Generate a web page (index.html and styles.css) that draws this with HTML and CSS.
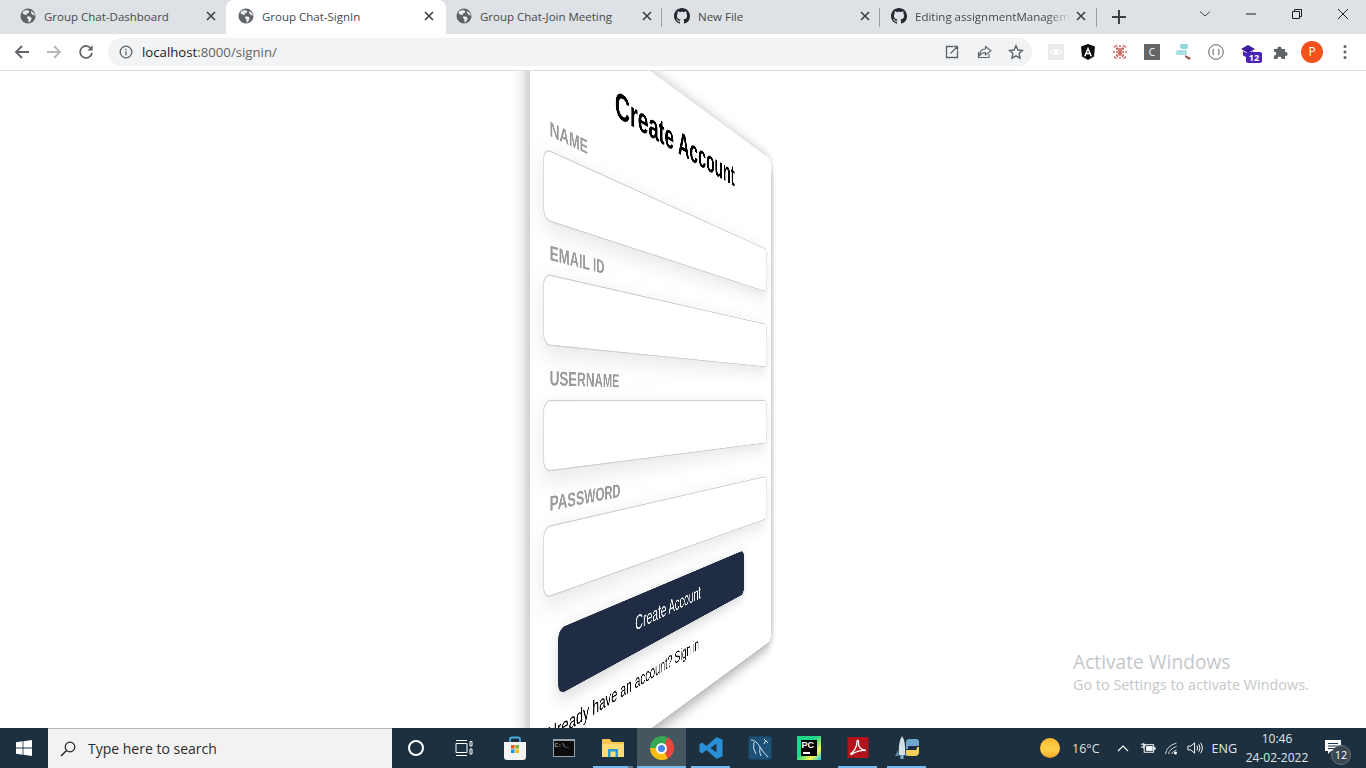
FILE: index.html
```html
<!DOCTYPE html>
<html lang="en">
<head>
<meta charset="utf-8">
<title>Group Chat-SignIn</title>
<link rel="stylesheet" href="styles.css">
</head>
<body>
<svg class="defs" width="0" height="0" aria-hidden="true">
  <symbol id="globe" viewBox="0 0 16 16"><circle cx="8" cy="8" r="7.5" fill="#5f6368"/><path d="M3 3.2 6.6 2 9.4 3 8.8 4.8 7 5.4 6.4 7.2 4.4 6.4 2.6 5.4zM7.6 8.2 10.6 8.8 11.8 10.4 10 14 8.6 14.4 8.4 11.4 6.8 9.8zM11.2 3 14 5 15 7.6 12.8 7 11 5z" fill="#e8eaed"/></symbol>
  <symbol id="octo" viewBox="0 0 16 16"><path fill="#24292f" d="M8 0C3.58 0 0 3.58 0 8c0 3.54 2.29 6.53 5.47 7.59.4.07.55-.17.55-.38 0-.19-.01-.82-.01-1.49-2.01.37-2.53-.49-2.69-.94-.09-.23-.48-.94-.82-1.13-.28-.15-.68-.52-.01-.53.63-.01 1.08.58 1.23.82.72 1.21 1.87.87 2.33.66.07-.52.28-.87.51-1.07-1.78-.2-3.64-.89-3.64-3.95 0-.87.31-1.59.82-2.15-.08-.2-.36-1.02.08-2.12 0 0 .67-.21 2.2.82.64-.18 1.32-.27 2-.27.68 0 1.36.09 2 .27 1.53-1.04 2.2-.82 2.2-.82.44 1.1.16 1.92.08 2.12.51.56.82 1.27.82 2.15 0 3.07-1.87 3.75-3.65 3.95.29.25.54.73.54 1.48 0 1.07-.01 1.93-.01 2.2 0 .21.15.46.55.38A8.013 8.013 0 0016 8c0-4.42-3.58-8-8-8z"/></symbol>
  <symbol id="x" viewBox="0 0 10 10"><path d="M1 1 9 9M9 1 1 9" stroke="#3c4043" stroke-width="1.6" fill="none"/></symbol>
</svg>

<header class="tabstrip">
  <div class="tab"><svg class="fav"><use href="#globe"/></svg><span class="tab-title">Group Chat-Dashboard</span><svg class="tab-x"><use href="#x"/></svg></div>
  <div class="tab tab-active"><svg class="fav"><use href="#globe"/></svg><span class="tab-title">Group Chat-SignIn</span><svg class="tab-x"><use href="#x"/></svg></div>
  <div class="tab"><svg class="fav"><use href="#globe"/></svg><span class="tab-title">Group Chat-Join Meeting</span><svg class="tab-x"><use href="#x"/></svg></div>
  <div class="tab tab-sep"><svg class="fav"><use href="#octo"/></svg><span class="tab-title">New File</span><svg class="tab-x"><use href="#x"/></svg></div>
  <div class="tab tab-sep tab-last"><svg class="fav"><use href="#octo"/></svg><span class="tab-title tab-fade">Editing assignmentManagem</span><svg class="tab-x"><use href="#x"/></svg></div>
  <svg class="new-tab" viewBox="0 0 14 14"><path d="M7 0V14M0 7H14" stroke="#3c4043" stroke-width="2"/></svg>
  <div class="win-controls">
    <svg class="win-btn" viewBox="0 0 12 12"><path d="M1 3.5 6 8 11 3.5" stroke="#3c4043" fill="none"/></svg>
    <svg class="win-btn" viewBox="0 0 12 12"><path d="M1 6H11" stroke="#1f1f1f"/></svg>
    <svg class="win-btn" viewBox="0 0 12 12"><path d="M1.5 3.5H8.5V10.5H1.5ZM3.5 3.5V1.5H10.5V8.5H8.5" stroke="#1f1f1f" fill="none"/></svg>
    <svg class="win-btn" viewBox="0 0 12 12"><path d="M1 1 11 11M11 1 1 11" stroke="#1f1f1f" fill="none"/></svg>
  </div>
</header>

<nav class="toolbar">
  <svg class="nav-ico" viewBox="0 0 16 16"><path d="M15 8H2M8 2 2 8l6 6" stroke="#5f6368" stroke-width="1.8" fill="none"/></svg>
  <svg class="nav-ico" viewBox="0 0 16 16"><path d="M1 8H14M8 2l6 6-6 6" stroke="#b4b7bb" stroke-width="1.8" fill="none"/></svg>
  <svg class="nav-ico" viewBox="0 0 16 16"><path d="M13.4 5.2A6 6 0 1 0 14 9" stroke="#5f6368" stroke-width="1.7" fill="none"/><path d="M14.6 1.2V6.4H9.4z" fill="#5f6368"/></svg>
  <div class="omnibox">
    <svg class="info" viewBox="0 0 14 14"><circle cx="7" cy="7" r="5.8" stroke="#5f6368" stroke-width="1.3" fill="none"/><path d="M7 6.2V10.2M7 3.8V5.2" stroke="#5f6368" stroke-width="1.3"/></svg>
    <span class="url">localhost<span class="url-dim">:8000/signin/</span></span>
    <div class="omni-actions">
      <svg class="omni-ico" viewBox="0 0 16 16"><path d="M9 2.5H2.5V13.5H13.5V7M6.5 9.5 13.5 2.5M9.5 2.5H13.5V6.5" stroke="#5f6368" stroke-width="1.3" fill="none"/></svg>
      <svg class="omni-ico" viewBox="0 0 16 16"><path d="M2.5 8V13.5H13V10M9.5 2.5 15 6.8 9.5 11V8.6C6 8.6 4.5 10 3.5 12 3.5 8 5.5 5.2 9.5 5Z" stroke="#5f6368" stroke-width="1.1" fill="none"/></svg>
      <svg class="omni-ico" viewBox="0 0 16 16"><path d="M8 1.8 9.9 6l4.6.5-3.4 3.1.9 4.6L8 11.9l-4 2.3.9-4.6L1.5 6.5 6.100 6Z" stroke="#5f6368" stroke-width="1.4" fill="none"/></svg>
    </div>
  </div>
  <div class="extensions">
    <span class="ext"><svg viewBox="0 0 16 16"><rect width="16" height="16" fill="#ececec"/><path d="M2 8Q8 3 14 8 8 13 2 8Z" stroke="#fff" fill="none"/><circle cx="8" cy="8" r="2" fill="#fff"/></svg></span>
    <span class="ext"><svg viewBox="0 0 16 16"><path d="M8 0 15 2.600 14 12.500 8 16 2 12.500 1 2.600Z" fill="#0c0c0c"/><path d="M8 2.800 4 12.200H5.600L6.400 10.200H9.600L10.400 12.200H12ZM7 8.800 8 6.200 9 8.800Z" fill="#fff"/></svg></span>
    <span class="ext"><svg viewBox="0 0 16 16"><path d="M2 2 14 14M14 2 2 14M8 1V15M1 8H15M4 1 12 15M12 1 4 15" stroke="#c9655f" stroke-width="1.500" stroke-dasharray="2 1"/></svg></span>
    <span class="ext"><span class="ext-c">C</span></span>
    <span class="ext"><svg viewBox="0 0 16 16"><rect x="4" y="0" width="8" height="5" rx="2" fill="#8fd6dc"/><rect x="0" y="6" width="11" height="5" rx="2" fill="#a7e0e4"/><path d="M9 11 15 14 13 16 9 13Z" fill="#9b5a50"/></svg></span>
    <span class="ext"><svg viewBox="0 0 16 16"><circle cx="8" cy="8" r="7.300" stroke="#5f6368" fill="none"/><path d="M6 5Q4.500 5 5 8 4.500 11 6 11M10 5Q11.500 5 11 8 11.500 11 10 11M8 8H8.100" stroke="#5f6368" fill="none"/></svg></span>
    <span class="ext ext-wide"><svg viewBox="0 0 16 16"><path d="M8 1 15 5 8 9 1 5Z" fill="#3d1c9b"/><path d="M3 7V11.500L8 14 13 11.500V7L8 10Z" fill="#4a22b5"/></svg><span class="ext-badge">12</span></span>
    <span class="ext"><svg viewBox="0 0 16 16"><path d="M2 5H5.500C5 1.500 10 1.500 9.500 5H13V8C16.500 7.500 16.500 12.500 13 12V15H9.500C10 12 5 12 5.500 15H2V11.500C5 12 5 7 2 8Z" fill="#5f6368"/></svg></span>
    <span class="avatar">P</span>
    <svg class="kebab" viewBox="0 0 4 16"><circle cx="2" cy="2.500" r="1.500" fill="#5f6368"/><circle cx="2" cy="8" r="1.500" fill="#5f6368"/><circle cx="2" cy="13.500" r="1.500" fill="#5f6368"/></svg>
  </div>
</nav>

<main class="viewport">
  <form class="card">
    <h1 class="card-title">Create Account</h1>
    <label class="field"><span class="field-label">NAME</span><input class="field-input" type="text"></label>
    <label class="field"><span class="field-label">EMAIL ID</span><input class="field-input" type="text"></label>
    <label class="field"><span class="field-label">USERNAME</span><input class="field-input" type="text"></label>
    <label class="field"><span class="field-label">PASSWORD</span><input class="field-input" type="password"></label>
    <button class="submit" type="button">Create Account</button>
    <p class="signin-hint">Already have an account? Sign in</p>
  </form>
  <div class="watermark">
    <div class="wm-title">Activate Windows</div>
    <div class="wm-sub">Go to Settings to activate Windows.</div>
  </div>
</main>

<footer class="taskbar">
  <div class="start"><svg viewBox="0 0 16 16"><path d="M0 2.300 6.600 1.300V7.600H0ZM7.400 1.200 16 0V7.600H7.400ZM0 8.400H6.600V14.700L0 13.700ZM7.400 8.400H16V16L7.400 14.800Z" fill="#fff"/></svg></div>
  <div class="search">
    <svg class="search-ico" viewBox="0 0 16 16"><circle cx="10" cy="6" r="4.800" stroke="#222" stroke-width="1.200" fill="none"/><path d="M6.500 9.500 1 15" stroke="#222" stroke-width="1.400"/></svg>
    <span class="search-text">Type here to search</span>
  </div>
  <div class="tb-slot tb-cortana"><span class="cortana"></span></div>
  <div class="tb-slot tb-taskview"><svg viewBox="0 0 18 16" class="ico-18"><path d="M1 3.500H12V12.500H1ZM1 0.500H12M1 15.500H12M15 1.500H17V6H15ZM15 9H17V14H15Z" stroke="#fff" fill="none"/></svg></div>
  <div class="tb-slot"><svg viewBox="0 0 24 24" class="ico-24"><path d="M7 7V3.500Q7 1.500 9 1.500H15Q17 1.500 17 3.500V7" stroke="#3fb1dc" stroke-width="1.800" fill="none"/><path d="M1 6H23V21Q23 24 20 24H4Q1 24 1 21Z" fill="#f3f3f3"/><rect x="8" y="9" width="3.600" height="3.600" fill="#e8532b"/><rect x="12.400" y="9" width="3.600" height="3.600" fill="#7db928"/><rect x="8" y="13.400" width="3.600" height="3.600" fill="#1a9ae0"/><rect x="12.400" y="13.400" width="3.600" height="3.600" fill="#fdb900"/></svg></div>
  <div class="tb-slot"><div class="cmd"><span class="cmd-bar"></span><span class="cmd-text">C:\_</span></div></div>
  <div class="tb-slot tb-open tb-open-multi"><svg viewBox="0 0 24 24" class="ico-24"><path d="M1 3H9L11 6H23V21H1Z" fill="#f8c44f"/><path d="M1 8H23V21H1Z" fill="#fddc75"/><path d="M7 13H17V21H14.500V15.500H9.500V21H7Z" fill="#2b9bd8"/></svg></div>
  <div class="tb-slot tb-open tb-active"><span class="chrome"><span class="chrome-eye"></span></span></div>
  <div class="tb-slot tb-open"><svg viewBox="0 0 24 24" class="ico-24"><path d="M17.500 1 23.500 3.800V20.200L17.500 23 7.500 14 3 17.500 .5 16V8L3 6.500 7.500 10ZM17.500 7.500 11.500 12 17.500 16.500Z" fill="#2b8fd6"/></svg></div>
  <div class="tb-slot"><svg viewBox="0 0 24 24" class="ico-24"><rect x="0.500" y="0.500" width="23" height="23" rx="2" fill="#1d5278"/><path d="M3 4Q8 4 12 11 15 16 20 21M6 6Q4 12 8 18M12 11Q11 17 13 20M16 3 20 7M18 4 16 8" stroke="#cfe0ea" stroke-width="1" fill="none"/></svg></div>
  <div class="tb-slot"><div class="pycharm"><span class="pc-inner"><span class="pc-text">PC</span><span class="pc-bar"></span></span></div></div>
  <div class="tb-slot tb-open"><svg viewBox="0 0 24 24" class="ico-24"><rect x="1.500" y="1" width="21" height="21" rx="1" fill="#b3131b"/><path d="M4 18C8 16 11 11 11 6 11 3.500 13 4 12.500 7 12 11 15 14 20 14.500 16 14 9 15 5 19" stroke="#fff" stroke-width="1.300" fill="none"/></svg></div>
  <div class="tb-slot tb-open"><svg viewBox="0 0 26 26" class="ico-26"><path d="M8 1Q12 6 11 20H5Q4 7 8 1Z" fill="#d4dfe6"/><path d="M4 15 1 21H5M12 15 15 21H11" fill="#5d87a8"/><path d="M8 24V20" stroke="#7fb4d8" stroke-width="3"/><path d="M15 4H22Q25 4 25 7V11H14V14H12V8Q12 4 15 4Z" fill="#6fa7cf"/><path d="M23 12H25V17Q25 21 21 21H15Q12 21 12 18V15H22Q23 15 23 12Z" fill="#f2cf58"/></svg></div>
  <div class="tray">
    <span class="sun"></span>
    <span class="temp">16°C</span>
    <svg class="tray-chev" viewBox="0 0 12 8"><path d="M1 7 6 2 11 7" stroke="#fff" stroke-width="1.200" fill="none"/></svg>
    <svg class="tray-ico" viewBox="0 0 18 14"><path d="M2 3H5M2 6H5M5 1.500V7.500M5 4.500H7" stroke="#fff" fill="none"/><rect x="5.500" y="3.500" width="10" height="8" stroke="#fff" fill="none"/><rect x="7.500" y="5" width="7" height="5" fill="#fff"/><rect x="16" y="6" width="1.500" height="3" fill="#fff"/></svg>
    <svg class="tray-ico" viewBox="0 0 16 14"><path d="M2 13Q3 5 13 2M5 13Q6 8 13 5.500M8 13Q9 10.500 13 9" stroke="#cfd6db" fill="none"/><circle cx="12" cy="12" r="1.500" fill="#fff"/></svg>
    <svg class="tray-ico" viewBox="0 0 18 14"><path d="M1 5H4L8 1.500V12.500L4 9H1Z" stroke="#fff" fill="none"/><path d="M10.500 4.500Q12 7 10.500 9.500M12.500 3Q15 7 12.500 11M14.500 1.500Q18 7 14.500 12.500" stroke="#fff" fill="none"/></svg>
    <span class="lang">ENG</span>
    <div class="clock"><span>10:46</span><span>24-02-2022</span></div>
    <div class="notif">
      <svg class="notif-ico" viewBox="0 0 16 15"><path d="M0 0H16V11H6L3 14V11H0Z" fill="#fff"/><path d="M3 3.500H13M3 6H13M3 8.500H10" stroke="#1d3140"/></svg>
      <span class="notif-badge">12</span>
    </div>
  </div>
</footer>
</body>
</html>
```
FILE: styles.css
```css
* { box-sizing: border-box; }
html, body { margin: 0; height: 100%; }
body {
  width: 1366px;
  height: 768px;
  overflow: hidden;
  display: flex;
  flex-direction: column;
  font-family: "Open Sans", "Noto Sans", sans-serif;
  background: #fff;
}
.defs { position: absolute; }

/* tab strip */
.tabstrip {
  flex: 0 0 34px;
  height: 34px;
  background: #dee1e6;
  display: flex;
  align-items: stretch;
  padding-left: 8px;
  position: relative;
  z-index: 2;
}
.tab {
  width: 218px;
  display: flex;
  align-items: center;
  padding: 0 8px 2px 12px;
  font-size: 11.500px;
  color: #45494e;
  position: relative;
}
.tab-active {
  width: 220px;
  margin-right: -2px;
  padding-right: 10px;
  background: #fff;
  border-radius: 8px 8px 0 0;
}
.tab-sep::before {
  content: "";
  position: absolute;
  left: -1px;
  top: 8px;
  height: 19px;
  width: 1px;
  background: #9aa0a6;
}
.tab-last { width: 216px; padding-left: 11px; }
.tab-last::after {
  content: "";
  position: absolute;
  right: -1px;
  top: 8px;
  height: 19px;
  width: 1px;
  background: #9aa0a6;
}
.fav { width: 16px; height: 16px; flex: none; margin-right: 8px; }
.tab-title { flex: 1; white-space: nowrap; overflow: hidden; }
.tab-fade { -webkit-mask-image: linear-gradient(90deg, #000 85%, transparent); mask-image: linear-gradient(90deg, #000 85%, transparent); }
.tab-x { width: 10px; height: 10px; flex: none; margin: 0 2px 0 6px; }
.new-tab { width: 14px; height: 14px; margin: 10px 0 0 16px; }
.win-controls {
  margin-left: auto;
  display: flex;
  gap: 34px;
  padding: 8px 17px 0 0;
}
.win-btn { width: 12px; height: 12px; }

/* toolbar */
.toolbar {
  flex: 0 0 37px;
  height: 37px;
  background: #fff;
  border-bottom: 1px solid #dadce0;
  display: flex;
  align-items: center;
  padding: 0 0 1px 14px;
  position: relative;
  z-index: 2;
}
.nav-ico { width: 16px; height: 16px; margin-right: 16px; }
.omnibox {
  width: 924px;
  height: 28px;
  margin-left: -2px;
  border-radius: 14px;
  background: #f1f3f4;
  display: flex;
  align-items: center;
  padding-left: 11px;
}
.info { width: 14px; height: 14px; }
.url { font-size: 13.200px; margin-left: 9px; color: #202124; }
.url-dim { color: #5f6368; }
.omni-actions { margin-left: auto; display: flex; gap: 16px; padding-right: 8px; }
.omni-ico { width: 16px; height: 16px; }
.extensions { display: flex; align-items: center; margin-left: 8px; }
.ext { width: 32px; height: 16px; display: flex; justify-content: center; position: relative; }
.ext svg { width: 16px; height: 16px; }
.ext-c {
  width: 16px; height: 16px;
  background: #666;
  color: #fff;
  font: 10px/16px "Open Sans", sans-serif;
  text-align: center;
}
.ext-badge {
  position: absolute;
  left: 14px;
  top: 8px;
  width: 16px;
  height: 11px;
  border-radius: 2px;
  background: #4a22b5;
  color: #fff;
  font: bold 9px/11px "Open Sans", sans-serif;
  text-align: center;
}
.avatar {
  width: 22px; height: 22px;
  margin-left: 5px;
  border-radius: 50%;
  background: #f4511e;
  color: #fff;
  font-size: 12px;
  line-height: 22px;
  text-align: center;
}
.kebab { width: 4px; height: 16px; margin-left: 20px; }

/* page */
.viewport {
  flex: 1;
  min-height: 0;
  position: relative;
  overflow: hidden;
  background: #fff;
  display: flex;
  align-items: center;
  justify-content: center;
}
.card {
  width: 448px;
  height: 610px;
  flex: none;
  padding: 30px 14px 0 15px;
  border-radius: 10px;
  background: #fff;
  box-shadow: 0 4px 18px rgba(0, 0, 0, .38);
  transform: perspective(720px) rotateY(60deg);
  font-family: "Liberation Sans", Arial, sans-serif;
  display: flex;
  flex-direction: column;
}
.card-title {
  margin: 0 0 17.600px;
  height: 40px;
  font-size: 32px;
  line-height: 40px;
  font-weight: 700;
  color: #000;
  text-align: center;
}
.field { display: block; margin-bottom: 12.700px; }
.field-label {
  display: block;
  height: 24px;
  margin-bottom: 4px;
  padding-left: 7px;
  font-size: 16px;
  line-height: 24px;
  font-weight: 700;
  color: #9a9a9a;
}
.field-input {
  display: block;
  width: 100%;
  height: 54px;
  border: 1px solid #d0d0d0;
  border-radius: 8px;
  background: #fff;
  box-shadow: 0 6px 20px rgba(0, 0, 0, .1);
}
.submit {
  align-self: flex-start;
  width: 335px;
  height: 51px;
  margin: 14.600px 0 0 17px;
  border: 0;
  border-radius: 8px;
  background: #1f2c44;
  color: #fff;
  font-family: inherit;
  font-size: 18px;
  box-shadow: 0 4px 14px rgba(0, 0, 0, .16);
}
.signin-hint {
  margin: 14px 0 0 1px;
  font-size: 16.200px;
  line-height: 24px;
  color: #000;
}
.watermark {
  position: absolute;
  left: 1073px;
  top: 578px;
  color: #c4c7ca;
}
.wm-title { font-size: 19.200px; line-height: 26px; }
.wm-sub { font-size: 14.400px; line-height: 20px; }

/* taskbar */
.taskbar {
  flex: 0 0 40px;
  height: 40px;
  background: #1c3040;
  display: flex;
  align-items: stretch;
  position: relative;
  z-index: 2;
}
.start { width: 48px; display: flex; align-items: center; justify-content: center; }
.start svg { width: 16px; height: 16px; }
.search {
  width: 344px;
  background: #f2f2f2;
  border-top: 1px solid #b8b8b8;
  display: flex;
  align-items: center;
  padding-left: 12px;
  color: #2b2b2b;
}
.search-ico { width: 16px; height: 16px; }
.search-text { font-size: 14px; margin-left: 12px; }
.tb-slot {
  width: 49px;
  display: flex;
  align-items: center;
  justify-content: center;
  position: relative;
}
.tb-cortana { width: 48px; }
.tb-taskview { width: 48px; margin-right: 2px; }
.cortana { width: 16px; height: 16px; border: 2.500px solid #fff; border-radius: 50%; }
.ico-18 { width: 18px; height: 16px; }
.ico-24 { width: 24px; height: 24px; }
.ico-26 { width: 26px; height: 26px; }
.tb-open::after {
  content: "";
  position: absolute;
  left: 5px;
  right: 5px;
  bottom: 0;
  height: 2px;
  background: #76b9ed;
}
.tb-active { background: #46565f; }
.tb-active::after { left: 0; right: 0; }
.tb-open-multi::after { right: 9px; }
.tb-open-multi::before {
  content: "";
  position: absolute;
  left: 40px;
  width: 5px;
  bottom: 0;
  height: 2px;
  background: #5f7a8c;
}
.cmd {
  width: 22px; height: 18px;
  background: #0c0c0c;
  border: 1px solid #9aa3a8;
  border-top-width: 2px;
  position: relative;
}
.cmd-bar { display: block; }
.cmd-text { display: block; color: #ddd; font: 6px/10px "Liberation Mono", monospace; padding-left: 1px; }
.chrome {
  width: 24px; height: 24px;
  border-radius: 50%;
  background: conic-gradient(from 30deg, #e8453c 0 120deg, #f9bc15 120deg 240deg, #34a853 240deg 360deg);
  display: flex;
  align-items: center;
  justify-content: center;
}
.chrome-eye { width: 11px; height: 11px; border-radius: 50%; background: #4285f4; border: 2px solid #fff; }
.pycharm {
  width: 24px; height: 24px;
  background: linear-gradient(135deg, #21d789 0 45%, #fcf84a 75%, #07c3f2);
  padding: 4px;
}
.pc-inner { display: block; width: 16px; height: 16px; background: #000; position: relative; }
.pc-text { display: block; color: #fff; font: bold 9px/11px "Liberation Sans", sans-serif; padding-left: 1px; }
.pc-bar { display: block; width: 7px; height: 1.500px; margin: 1px 0 0 2px; background: #fff; }
.tray {
  margin-left: auto;
  display: flex;
  align-items: center;
  color: #fff;
}
.sun {
  width: 20px; height: 20px;
  border-radius: 50%;
  background: linear-gradient(180deg, #f9b92c, #ffcf4a 60%, #f5a623);
}
.temp { font-size: 12.500px; margin-left: 12px; color: #dfe3e6; }
.tray-chev { width: 12px; height: 8px; margin-left: 17px; }
.tray-ico { width: 17px; height: 14px; margin-left: 7px; }
.tray-chev + .tray-ico { margin-left: 10px; }
.lang { font-size: 12.500px; margin-left: 8px; color: #e4e7e9; }
.clock {
  width: 72px;
  margin-left: 4px;
  display: flex;
  flex-direction: column;
  align-items: center;
  font-size: 12px;
  line-height: 19px;
  color: #e4e7e9;
}
.notif { width: 53px; height: 40px; position: relative; }
.notif-ico { position: absolute; left: 12px; top: 12px; width: 16px; height: 15px; }
.notif-badge {
  position: absolute;
  left: 18px;
  top: 17px;
  width: 20px;
  height: 20px;
  border-radius: 50%;
  background: #3a4650;
  border: 1px solid #6b747b;
  font-size: 11px;
  line-height: 18px;
  text-align: center;
  color: #fff;
}
```
